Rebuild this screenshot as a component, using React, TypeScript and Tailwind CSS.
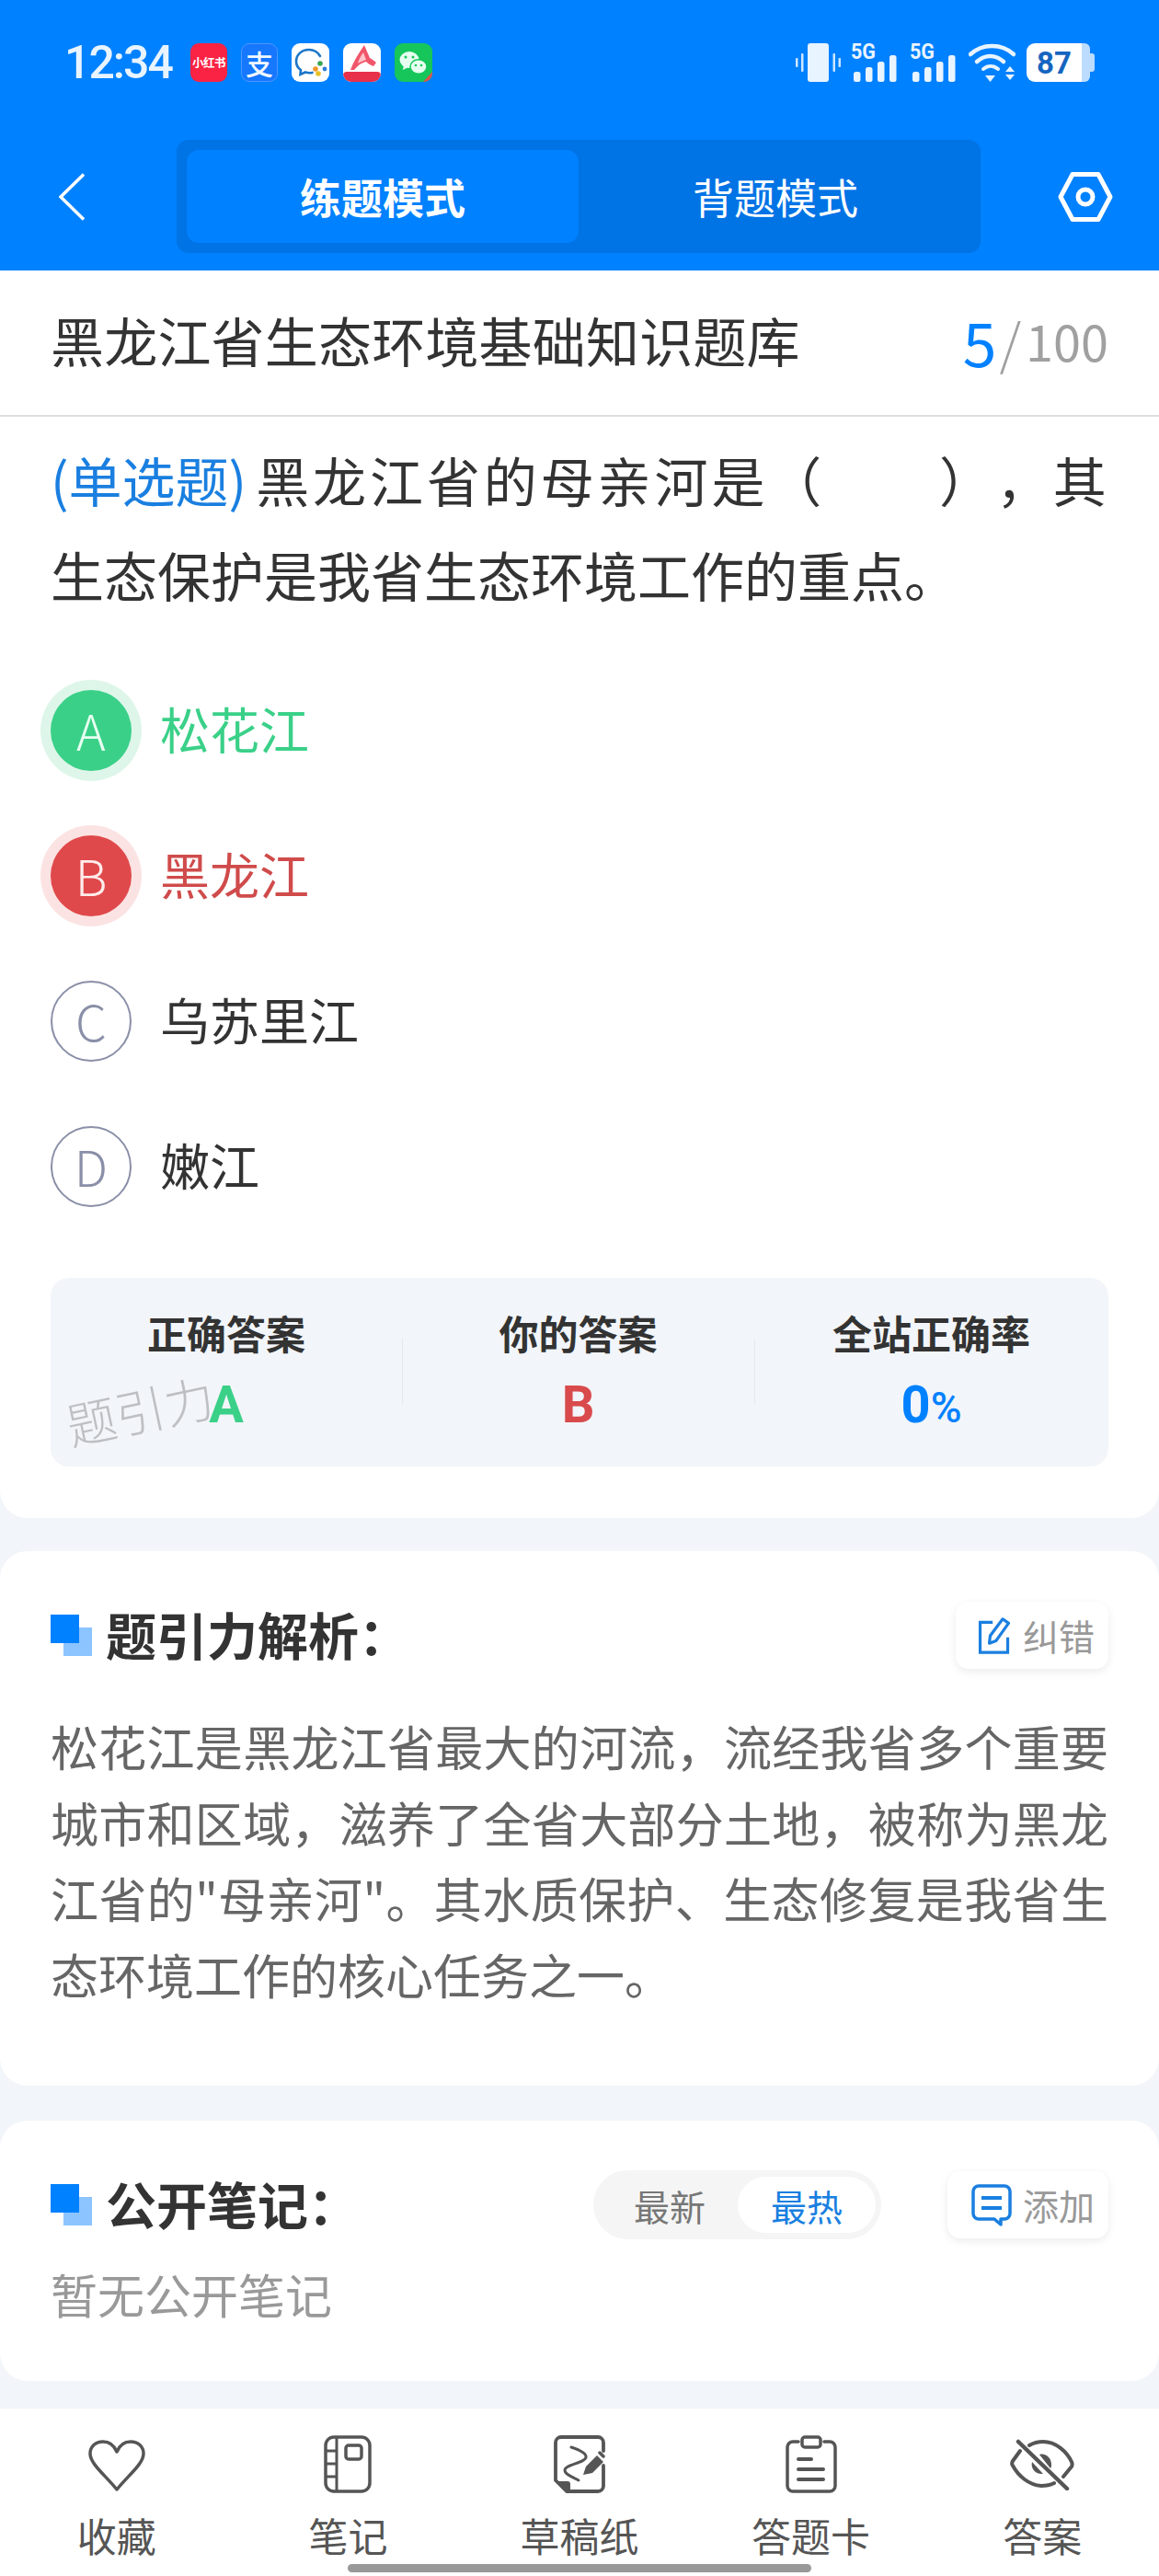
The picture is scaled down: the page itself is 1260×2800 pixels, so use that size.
const cjk = "font-['Noto_Sans_CJK_SC','Noto_Sans',sans-serif]";

function AppIcons() {
  return (
    <div className="flex gap-[15px] ml-[20px]">
      <div className="w-[40px] h-[42px] rounded-[9px] bg-[#fb2343] flex items-center justify-center text-white text-[12.5px] font-bold leading-none tracking-[-0.5px] whitespace-nowrap">小红书</div>
      <div className="w-[40px] h-[42px] rounded-[9px] bg-[#1677ff] border border-[#4d97ff] flex items-center justify-center text-[#f0f7ff] text-[30px] font-medium leading-none">支</div>
      <div className="w-[41px] h-[42px] rounded-[9px] bg-white">
        <svg viewBox="0 0 41 42" className="w-full h-full">
          <path d="M31 14C28 9 24 7 19 7 11 7 5 12.500 5 19.500c0 4 2 7.500 5 9.500l-.5 5 5.500-2.500c2.500.7 5 .9 7.500.4" fill="none" stroke="#1b76c8" strokeWidth="2.600" strokeLinecap="round" />
          <circle cx="31" cy="22" r="2.800" fill="#3aa655" />
          <circle cx="26" cy="28" r="2.800" fill="#f29727" />
          <circle cx="29" cy="33" r="2.800" fill="#e9c126" />
          <circle cx="36" cy="28" r="2.400" fill="#2f7fd9" />
        </svg>
      </div>
      <div className="w-[41px] h-[42px] rounded-[9px] bg-white overflow-hidden flex flex-col">
        <svg viewBox="0 0 41 31" className="w-full h-[31px]">
          <path d="M23 2l6 14c3 2 5 3 7 5l-3 4c-3-1-6-3-8-5-5 1-9 4-13 9H8c3-9 9-18 15-27z" fill="#f0566a" />
          <path d="M22 10c-3 4-5 8-6 12 3-2 6-3 9-4z" fill="#ffc4cb" />
        </svg>
        <div className="h-[11px] rounded-t-[4px] bg-[#e8304a]" />
      </div>
      <div className="relative w-[41px] h-[42px] rounded-[9px] bg-[#16c65b] overflow-hidden">
        <svg viewBox="0 0 41 42" className="w-full h-full">
          <ellipse cx="16" cy="18" rx="10.500" ry="9" fill="#e6fff0" />
          <path d="M10 24l-1 5 6-3z" fill="#e6fff0" />
          <ellipse cx="26" cy="25.500" rx="9" ry="7.800" fill="#e6fff0" stroke="#16c65b" strokeWidth="1.500" />
          <circle cx="12" cy="15" r="1.500" fill="#16c65b" />
          <circle cx="20" cy="15" r="1.500" fill="#16c65b" />
          <circle cx="23" cy="24" r="1.300" fill="#16c65b" />
          <circle cx="29" cy="24" r="1.300" fill="#16c65b" />
          <path d="M41 31v11H31z" fill="#d9534f" />
        </svg>
      </div>
    </div>
  );
}

function SignalIcon() {
  return (
    <svg viewBox="0 0 50 42" className="w-[50px] h-[42px] overflow-visible">
      <text x="0" y="17" fontSize="23" fontWeight="700" fill="#e8f4ff" fontFamily="'Roboto',sans-serif" textLength="27" lengthAdjust="spacingAndGlyphs">5G</text>
      <rect x="3" y="31" width="7.500" height="11" rx="2.500" fill="#e8f4ff" />
      <rect x="16" y="26" width="7.500" height="16" rx="2.500" fill="#e8f4ff" />
      <rect x="29" y="20" width="7.500" height="22" rx="2.500" fill="#e8f4ff" />
      <rect x="42" y="13" width="7.500" height="29" rx="2.500" fill="#e8f4ff" />
    </svg>
  );
}

function StatusIcons() {
  return (
    <div className="flex items-center">
      <svg viewBox="0 0 49 42" className="w-[49px] h-[42px]">
        <rect x="13" y="0" width="23" height="42" rx="3" fill="#e8f4ff" />
        <rect x="6" y="11" width="2.500" height="20" rx="1" fill="#cfe6ff" />
        <rect x="0" y="16" width="2.500" height="10" rx="1" fill="#cfe6ff" />
        <rect x="40.500" y="11" width="2.500" height="20" rx="1" fill="#cfe6ff" />
        <rect x="46.500" y="16" width="2.500" height="10" rx="1" fill="#cfe6ff" />
      </svg>
      <div className="ml-[11px]"><SignalIcon /></div>
      <div className="ml-[14px]"><SignalIcon /></div>
      <svg viewBox="0 0 51 42" className="w-[51px] h-[42px] ml-[14px]">
        <path d="M2 12C15 0 36 0 49 12" fill="none" stroke="#e8f4ff" strokeWidth="4.500" strokeLinecap="round" />
        <path d="M9 20c9-8 20-8 29 0" fill="none" stroke="#e8f4ff" strokeWidth="4.500" strokeLinecap="round" />
        <path d="M16 28c5-4 11-4 16 0" fill="none" stroke="#e8f4ff" strokeWidth="4" strokeLinecap="round" />
        <path d="M18 35h11l-5.500 7z" fill="#e8f4ff" />
        <path d="M40 31l5-6 5 6z" fill="#e8f4ff" />
        <path d="M40 34l5 6 5-6z" fill="#e8f4ff" />
      </svg>
      <div className="ml-[12px] flex items-center">
        <div className="w-[60px] h-[42px] bg-white rounded-l-[9px] flex items-center justify-center text-[#1565c0] text-[33px] font-bold font-['Roboto',sans-serif] leading-none">87</div>
        <div className="w-[9px] h-[42px] bg-[#bcdcff] rounded-r-[6px]" />
        <div className="w-[5px] h-[20px] bg-[#bcdcff] rounded-r-[3px]" />
      </div>
    </div>
  );
}

function Header() {
  return (
    <div className="h-[294px] bg-[#0081ff] shrink-0">
      <div className="h-[89px] pt-[47px] pl-[70px] pr-[70px] flex items-center justify-between">
        <div className="flex items-center">
          <span className="w-[117px] text-[50px] leading-[42px] tracking-[-2px] font-medium text-[#e8f4ff] font-['Roboto',sans-serif] whitespace-nowrap">12:34</span>
          <AppIcons />
        </div>
        <StatusIcons />
      </div>
      <div className="mt-[63px] h-[123px] pl-[64px] pr-[50px] flex items-center">
        <svg viewBox="0 0 28 52" className="w-[28px] h-[52px] shrink-0">
          <path d="M27 1.500L2 26l25 24.500" fill="none" stroke="#fff" strokeWidth="3.500" />
        </svg>
        <div className="ml-[100px] w-[874px] h-[123px] rounded-[13px] bg-[#0073e5] p-[11px] flex">
          <div className="w-[426px] rounded-[13px] bg-[#0081ff] flex items-center justify-center text-white text-[45px] font-bold">练题模式</div>
          <div className="flex-1 flex items-center justify-center text-white text-[45px] pl-[2px]">背题模式</div>
        </div>
        <svg viewBox="0 0 60 54" className="w-[60px] h-[54px] ml-[84px] shrink-0">
          <path d="M16 2.500h28L57 27 44 51.500H16L3 27z" fill="none" stroke="#fff" strokeWidth="5" strokeLinejoin="round" />
          <circle cx="30" cy="27" r="8" fill="none" stroke="#fff" strokeWidth="5" />
        </svg>
      </div>
    </div>
  );
}

const options = [
  { key: "A", text: "松花江", state: "right" },
  { key: "B", text: "黑龙江", state: "wrong" },
  { key: "C", text: "乌苏里江", state: "" },
  { key: "D", text: "嫩江", state: "" },
];

function Option({ item }: { item: (typeof options)[number] }) {
  return (
    <div className="h-[158px] flex items-center">
      {item.state === "right" && (
        <div className="w-[88px] h-[88px] pb-[3px] rounded-full bg-[#3ad088] ring-[11px] ring-[#def6e9] flex items-center justify-center text-[#e6fff1] text-[54px] font-light leading-none">{item.key}</div>
      )}
      {item.state === "wrong" && (
        <div className="w-[88px] h-[88px] pb-[3px] rounded-full bg-[#e0494b] ring-[11px] ring-[#fbe3e3] flex items-center justify-center text-[#ffecec] text-[54px] font-light leading-none">{item.key}</div>
      )}
      {item.state === "" && (
        <div className="w-[88px] h-[88px] pb-[3px] rounded-full border-2 border-[#8a8fa8] flex items-center justify-center text-[#8a8fa8] text-[54px] font-light leading-none">{item.key}</div>
      )}
      <span className={`ml-[31px] pb-[5px] text-[54px] ${item.state === "right" ? "text-[#3ad088]" : item.state === "wrong" ? "text-[#d04b4b]" : "text-[#333]"}`}>{item.text}</span>
    </div>
  );
}

function AnswerPanel() {
  return (
    <div className="relative mt-[42px] h-[205px] rounded-[20px] bg-[#f2f5f9] grid grid-cols-[382px_383px_385px] pt-[28px]">
      <div className="flex flex-col items-center">
        <span className="text-[43px] leading-[62px] font-bold text-[#333]">正确答案</span>
        <span className="mt-[18px] text-[56px] leading-[60px] font-bold text-[#3ad088] font-['Roboto',sans-serif]">A</span>
      </div>
      <div className="relative flex flex-col items-center">
        <div className="absolute left-0 top-[38px] h-[72px] w-px bg-[#e6e9ed]" />
        <span className="text-[43px] leading-[62px] font-bold text-[#333]">你的答案</span>
        <span className="mt-[18px] text-[56px] leading-[60px] font-bold text-[#d94a4c] font-['Roboto',sans-serif]">B</span>
      </div>
      <div className="relative flex flex-col items-center">
        <div className="absolute left-0 top-[38px] h-[72px] w-px bg-[#e6e9ed]" />
        <span className="text-[43px] leading-[62px] font-bold text-[#333]">全站正确率</span>
        <span className="mt-[18px] text-[56px] leading-[60px] font-bold text-[#0081ff] font-['Roboto',sans-serif]">0<span className="text-[46px] font-medium">%</span></span>
      </div>
      <span className="absolute left-[16px] top-[116px] text-[54px] leading-none font-light text-[#bdbfc2] -rotate-12 whitespace-nowrap">题引力</span>
    </div>
  );
}

function SectionMark() {
  return (
    <div className="relative w-[45px] h-[45px] shrink-0">
      <div className="absolute left-[14px] top-[14px] w-[31px] h-[31px] bg-[#8cc4ff]" />
      <div className="absolute left-0 top-0 w-[31px] h-[31px] bg-[#0081ff]" />
    </div>
  );
}

function ToolButton({ label, children, width }: { label: string; children: React.ReactNode; width: string }) {
  return (
    <div className={`${width} h-[73px] pr-[15px] rounded-[14px] bg-white shadow-[0_3px_10px_rgba(0,0,0,0.08)] flex items-center justify-end gap-[12px]`}>
      {children}
      <span className="text-[39px] text-[#999] leading-none">{label}</span>
    </div>
  );
}

const analysisLines = [
  "松花江是黑龙江省最大的河流，流经我省多个重要",
  "城市和区域，滋养了全省大部分土地，被称为黑龙",
  "江省的\"母亲河\"。其水质保护、生态修复是我省生",
];

const navIcons = [
  <svg viewBox="0 0 62 56" className="w-[62px] h-[56px] mt-[3px]" key="fav">
    <path d="M31 54C18 38 2 26 2 15 2 7 8 2 16 2c7 0 12 4 15 11C34 6 39 2 46 2c8 0 14 5 14 13 0 11-16 23-29 39z" fill="none" stroke="#555" strokeWidth="3.500" strokeLinejoin="round" />
  </svg>,
  <svg viewBox="0 0 52 63" className="w-[52px] h-[63px]" key="note">
    <rect x="2" y="2" width="48" height="59" rx="9" fill="none" stroke="#555" strokeWidth="3.500" />
    <path d="M14 2v59M2 17h12M2 31h12M2 45h12" fill="none" stroke="#555" strokeWidth="3" />
    <rect x="24" y="11" width="17" height="15" rx="3" fill="none" stroke="#555" strokeWidth="3.500" />
  </svg>,
  <svg viewBox="0 0 56 63" className="w-[56px] h-[63px]" key="draft">
    <path d="M54 17V8a6 6 0 0 0-6-6H8a6 6 0 0 0-6 6v41l12 12h34a6 6 0 0 0 6-6V33" fill="none" stroke="#555" strokeWidth="3.800" strokeLinecap="round" strokeLinejoin="round" />
    <path d="M3 50h12c2 0 3 1 3 3v9h-4z" fill="#555" />
    <path d="M19 13c6 2 17 6 16 11-1 6-23 8-23 14 0 5 10 8 15 11" fill="none" stroke="#555" strokeWidth="3" strokeLinecap="round" />
    <path d="M32 43l3-9 12-12 7 7-12 12z" fill="#555" />
    <path d="M50 19l4 4" fill="none" stroke="#555" strokeWidth="3.500" strokeLinecap="round" />
  </svg>,
  <svg viewBox="0 0 56 63" className="w-[56px] h-[63px]" key="card">
    <path d="M14 7H8a6 6 0 0 0-6 6v42a6 6 0 0 0 6 6h40a6 6 0 0 0 6-6V13a6 6 0 0 0-6-6h-6" fill="none" stroke="#555" strokeWidth="3.500" strokeLinecap="round" />
    <rect x="18" y="2" width="20" height="11" rx="3" fill="none" stroke="#555" strokeWidth="3.500" />
    <path d="M14 26h14M14 37h27M14 48h27" fill="none" stroke="#555" strokeWidth="4" strokeLinecap="round" />
  </svg>,
  <svg viewBox="0 0 70 56" className="w-[70px] h-[56px]" key="eye">
    <path d="M11 13L3 24c-1 2-1 4 0 5 6 11 17 21 31 22 5 0 10-1 14-3M21 7c5-3 10-4 15-4 14 0 26 11 31 22 1 2 1 3 0 5l-9 11" fill="none" stroke="#555" strokeWidth="4" strokeLinecap="round" strokeLinejoin="round" />
    <path d="M32 17c7-2 13 4 13 11 0 1 0 3-1 4z" fill="#555" />
    <path d="M24 25c-2 7 4 14 12 13z" fill="#555" />
    <path d="M9 3l53 51" fill="none" stroke="#555" strokeWidth="4.500" strokeLinecap="round" />
  </svg>,
];

const navLabels = ["收藏", "笔记", "草稿纸", "答题卡", "答案"];

export default function App() {
  return (
    <div className={`relative w-[1260px] h-[2800px] overflow-hidden bg-[#f2f5f9] flex flex-col ${cjk}`}>
      <Header />

      <div className="bg-white rounded-b-[30px] shrink-0">
        <div className="h-[159px] border-b-2 border-[#dedede] pl-[55px] pr-[55px] flex items-center justify-between">
          <span className="pb-[6px] text-[58px] tracking-[0.2px] text-[#333] whitespace-nowrap">黑龙江省生态环境基础知识题库</span>
          <span className="flex items-center pb-[6px] text-[#a0a0a0] text-[54px] leading-none">
            <span className="text-[66px] text-[#0081ff]">5</span>
            <span className="ml-[3px] mr-[5px] text-[60px] font-light">/</span>100
          </span>
        </div>
        <div className="px-[55px] pb-[56px]">
          <div className="pt-[17px] text-[58px] leading-[103px] text-[#333]">
            <p className="tracking-[3.9px] whitespace-nowrap [text-spacing-trim:space-all]">
              <span className="inline-block tracking-normal text-[#1a7fe0] mr-[10px]">(单选题)</span>
              黑龙江省的母亲河是（　　），其
            </p>
            <p>生态保护是我省生态环境工作的重点。</p>
          </div>
          <div className="mt-[39px]">
            {options.map((o) => (
              <Option key={o.key} item={o} />
            ))}
          </div>
          <AnswerPanel />
        </div>
      </div>

      <div className="mt-[36px] bg-white rounded-[30px] px-[55px] pt-[55px] pb-[80px] shrink-0">
        <div className="flex items-center justify-between h-[73px]">
          <div className="flex items-center gap-[15px]">
            <SectionMark />
            <span className="pb-[4px] text-[55px] font-bold text-[#333]">题引力解析：</span>
          </div>
          <ToolButton label="纠错" width="w-[166px]">
            <svg viewBox="0 0 38 44" className="w-[38px] h-[40px]">
              <path d="M17 6H2v36h33V24" fill="none" stroke="#1a7fe0" strokeWidth="3.500" />
              <path d="M29 2l7 5-15 21-8 3 1-9z" fill="none" stroke="#1a7fe0" strokeWidth="3.500" strokeLinejoin="round" />
            </svg>
          </ToolButton>
        </div>
        <div className="mt-[43px] text-[52px] leading-[82.6px] text-[#666]">
          {analysisLines.map((line) => (
            <p key={line} className="[text-align-last:justify] whitespace-nowrap">{line}</p>
          ))}
          <p>态环境工作的核心任务之一。</p>
        </div>
      </div>

      <div className="mt-[38px] bg-white rounded-[30px] px-[55px] pt-[54px] pb-[60px] shrink-0">
        <div className="flex items-center h-[75px]">
          <SectionMark />
          <span className="ml-[15px] pb-[5px] text-[55px] font-bold text-[#333]">公开笔记：</span>
          <div className="ml-auto w-[313px] h-[75px] rounded-full bg-[#f5f5f5] flex items-center p-[6px] text-[39px]">
            <span className="flex-1 text-center text-[#777] pl-[3px]">最新</span>
            <span className="w-[150px] h-[61px] rounded-full bg-white flex items-center justify-center text-[#1a7fe0]">最热</span>
          </div>
          <div className="ml-[72px]">
            <ToolButton label="添加" width="w-[175px]">
              <svg viewBox="0 0 44 46" className="w-[44px] h-[46px]">
                <path d="M8 2h28a6 6 0 0 1 6 6v24a6 6 0 0 1-6 6h-4v6l-7-6H8a6 6 0 0 1-6-6V8a6 6 0 0 1 6-6z" fill="none" stroke="#1a7fe0" strokeWidth="3.500" strokeLinejoin="round" />
                <path d="M11 15h22M11 26h22" fill="none" stroke="#1a7fe0" strokeWidth="4" />
              </svg>
            </ToolButton>
          </div>
        </div>
        <p className="mt-[24px] text-[51px] leading-[70px] text-[#999]">暂无公开笔记</p>
      </div>

      <div className="mt-[30px] flex-1 bg-white flex pt-[29px] px-[1px]">
        {navLabels.map((label, i) => (
          <div key={label} className="flex-1 flex flex-col items-center">
            <div className="h-[63px] flex items-center">{navIcons[i]}</div>
            <span className="mt-[13px] text-[43px] leading-[64px] text-[#555]">{label}</span>
          </div>
        ))}
      </div>

      <div className="absolute left-[378px] top-[2787px] w-[504px] h-[9px] rounded-full bg-[#999]" />
    </div>
  );
}
